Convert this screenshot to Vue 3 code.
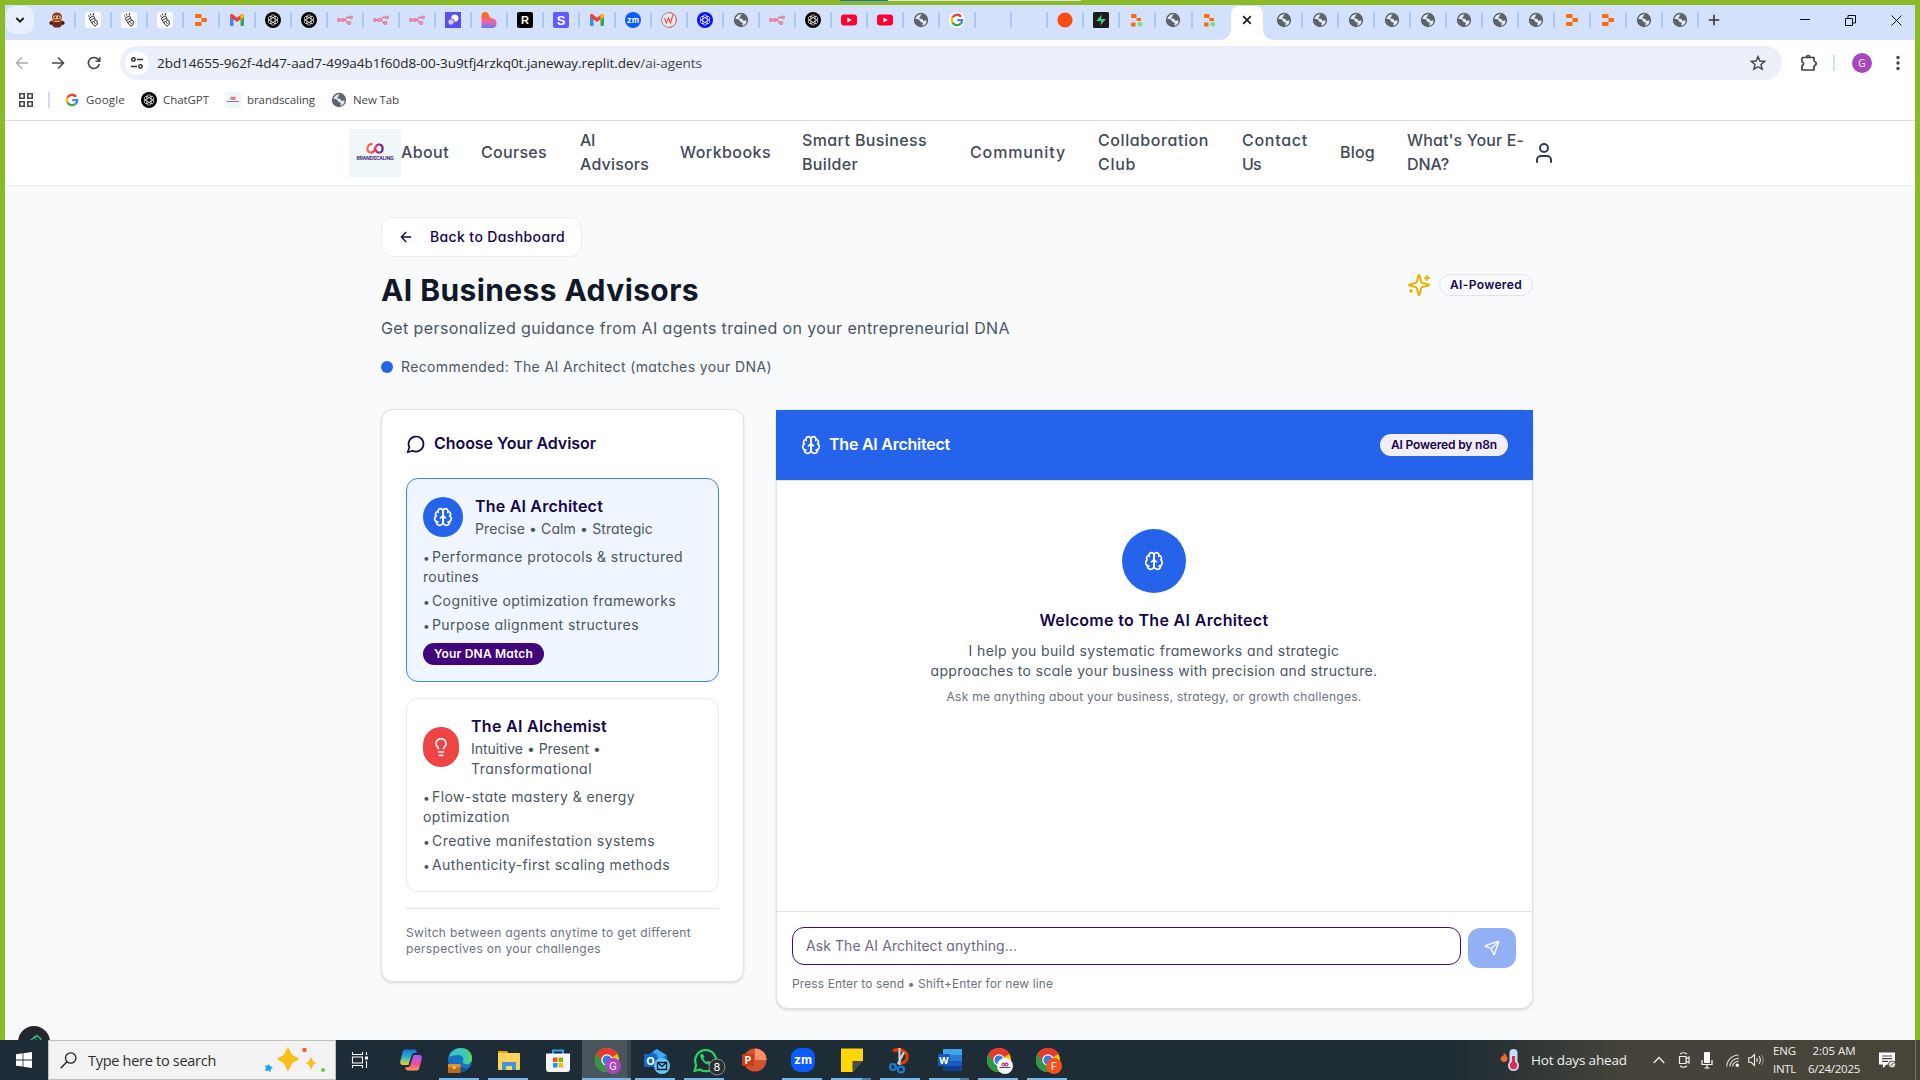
<script setup>
// Spreads the letters of a single line so that it fills the given width.
const vFit = {
  mounted(el, { value }) {
    if (!value) return
    const n = el.textContent.trim().length
    const w = el.getBoundingClientRect().width
    el.style.letterSpacing = ((value - w) / n).toFixed(3) + 'px'
  }
}

const knot = (c) =>
  `<circle cx="8" cy="8" r="8" fill="${c}"/><g fill="none" stroke="#fff" stroke-width=".7"><rect x="5.9" y="2.8" width="4.2" height="10.4" rx="2.1"/><rect x="5.9" y="2.8" width="4.2" height="10.4" rx="2.1" transform="rotate(60 8 8)"/><rect x="5.9" y="2.8" width="4.2" height="10.4" rx="2.1" transform="rotate(120 8 8)"/></g>`

const chromeBody =
  '<circle cx="12" cy="12" r="12" fill="#fbc116"/><path d="M12 12L1.6 6A12 12 0 0 1 22.4 6z" fill="#e33b2e"/><path d="M1.6 6A12 12 0 0 0 12 24L17 15 12 12z" fill="#2a9a48"/><path d="M12 6.3h10.5A12 12 0 0 0 1.6 6L7 15z" fill="#e33b2e"/><circle cx="12" cy="12" r="5.7" fill="#fff"/><circle cx="12" cy="12" r="4.5" fill="#2f7de9"/>'

const fav = {
  robot:
    '<ellipse cx="8" cy="5" rx="5" ry="4.6" fill="#8c3a1c"/><rect x="4" y="3.6" width="8" height="3.6" rx="1.6" fill="#f0b078"/><circle cx="6.2" cy="5.3" r=".9" fill="#2a1410"/><circle cx="9.8" cy="5.3" r=".9" fill="#2a1410"/><ellipse cx="8" cy="11" rx="7.4" ry="3.4" fill="#b5532a"/><rect x="4" y="9.5" width="8" height="6" rx="2" fill="#6e2a18"/><path d="M5.500 9.500h5" stroke="#f0b078"/><circle cx="2.2" cy="11" r="1.8" fill="#4a1d14"/><circle cx="13.8" cy="11" r="1.8" fill="#4a1d14"/>',
  hand:
    '<rect width="16" height="16" rx="2.5" fill="#f8fafc"/><g fill="none" stroke="#333" stroke-width="1"><path d="M4.200 6.200l4.300-2.400 1.200 2.200-4.300 2.400zM5.400 8.400l1.200 2.200 4-2.300-1-2.200M6.600 10.600l3.200 3.600 2.400-1.700V9l-1.600-1M5.200 1.500l.8 2M8.600 1l-.2 2M3 3.500l1.400 1M9 10.500l1.500 1"/></g>',
  replit:
    '<path fill="#fb6a0b" d="M3 2h4.500a1 1 0 0 1 1 1v3H3a1 1 0 0 1-1-1V3a1 1 0 0 1 1-1zM8.500 6H13a1 1 0 0 1 1 1v2a1 1 0 0 1-1 1H8.500zM3 10h5.500v3a1 1 0 0 1-1 1H3a1 1 0 0 1-1-1v-2a1 1 0 0 1 1-1z"/>',
  replitg:
    '<path fill="#fb6a0b" d="M3 2h3.500a1 1 0 0 1 1 1v3H3a1 1 0 0 1-1-1V3a1 1 0 0 1 1-1zM7.500 6H12v3H8.500a1 1 0 0 1-1-1zM3 10.500h3.500v4H3a1 1 0 0 1-1-1v-2a1 1 0 0 1 1-1z"/><circle cx="10.800" cy="12.200" r="2.400" fill="#74e08a"/>',
  gmail:
    '<path d="M1 4v9a1 1 0 0 0 1 1h2.500V7z" fill="#4285f4"/><path d="M15 4v9a1 1 0 0 1-1 1h-2.500V7z" fill="#34a853"/><path d="M1 5V3.500C1 2 2.600 1.500 3.600 2.300L8 5.700l4.400-3.400C13.400 1.500 15 2 15 3.500V5L8 10z" fill="#ea4335"/><path d="M11.500 3v4.500L15 5V3.500C15 2 13.400 1.500 12.400 2.300z" fill="#fbbc04"/>',
  gpt: knot('#000'),
  gptblue: knot('#0a12f5'),
  n8n:
    '<g fill="none" stroke="#ea6a8d" stroke-width="1.200"><circle cx="1.900" cy="8" r="1.300"/><circle cx="6" cy="8" r="1.300"/><circle cx="14" cy="5.300" r="1.300"/><circle cx="12.300" cy="11" r="1.300"/><path d="M3.200 8h1.500M7.300 8c2 0 1-2.700 3-2.700h2.400M8 8c1.700 0 1.300 3 3 3"/></g>',
  purple:
    '<rect width="16" height="16" fill="#5b4df5"/><circle cx="9.800" cy="6.200" r="3.600" fill="#fff"/><circle cx="6" cy="10" r="3.200" fill="#d6d2ff" stroke="#5b4df5"/>',
  flame:
    '<defs><linearGradient id="fl" x1="0" y1="0" x2="0" y2="1"><stop offset=".2" stop-color="#ff6a10"/><stop offset=".6" stop-color="#f263a8"/><stop offset="1" stop-color="#5a7bff"/></linearGradient></defs><path fill="url(#fl)" d="M.500 3.500a3.700 3.700 0 0 1 7-1.500c.8 1.800.8 3 2 3.800 1.200.8 3 .4 4.600 1.600 2.600 2.300 2 8.600-2.600 8.600H.500z"/>',
  r: '<rect width="16" height="16" rx="2" fill="#000"/><text x="8" y="12" text-anchor="middle" font-size="11" font-weight="700" fill="#fff" font-family="Liberation Sans,sans-serif">R</text>',
  s: '<rect width="16" height="16" rx="2" fill="#635bff"/><text x="8" y="12.500" text-anchor="middle" font-size="13" font-weight="700" fill="#fff" font-family="Liberation Sans,sans-serif">S</text>',
  zm: '<circle cx="8" cy="8" r="8" fill="#0b5cff"/><text x="8" y="10.500" text-anchor="middle" font-size="8" font-weight="700" fill="#fff" font-family="Inter,sans-serif">zm</text>',
  w: '<circle cx="8" cy="8" r="7.400" fill="#e9e9ee" stroke="#80838a" stroke-width=".9"/><path d="M8 .6a7.400 7.400 0 0 1 0 14.800" fill="none" stroke="#e66a5c" stroke-width=".9"/><path d="M3.500 6l1.800 5L7.500 6l2 5L12 2.500" fill="none" stroke="#dc5448" stroke-width="1.100"/>',
  globe:
    '<circle cx="8" cy="8" r="7.200" fill="#5f6368"/><path fill="#dfe9fb" d="M9.600 2.300c-1.500.1-2 .8-2 1.600 0 .9-1.200.9-1.200 1.900 0 1.100 1.300 1 2.300 1s1.300.8 1.300 1.500c0 .9 1.100.7 1.900.3.700-.3 1.200.1 1.700-.3.200 3-1.600 5-4.300 5.400-.3-.9.500-1.300.5-2.300 0-1.200-1.300-1.100-2.100-1.500C6.500 9.300 7 8 5.700 7.500 4.600 7.100 3.500 7 2.500 7.100c.4-3 3.500-5.600 7.100-4.800z"/>',
  yt: '<rect y="2.400" width="16" height="11.200" rx="3" fill="#ff0033"/><path d="M6.400 5.600L10.800 8l-4.400 2.400z" fill="#fff"/>',
  google:
    '<circle cx="8" cy="8" r="8" fill="#fff"/><g fill="none" stroke-width="2.300"><path d="M12.100 4.700A5.200 5.200 0 0 0 3.400 5.600" stroke="#ea4335"/><path d="M3.400 5.500a5.200 5.200 0 0 0 0 5" stroke="#fbbc05"/><path d="M3.400 10.400a5.200 5.200 0 0 0 8 1.500" stroke="#34a853"/><path d="M8.200 8.100h5a5.200 5.200 0 0 1-1.700 3.800" stroke="#4285f4"/></g>',
  none: '',
  dot: '<circle cx="8" cy="8" r="7.600" fill="#ff4a12"/>',
  supa: '<rect width="16" height="16" rx="1.500" fill="#1c1c1c"/><path d="M8.800 2.500L3.200 9h4.600zM7.500 13.500L12.900 7H8.300z" fill="#3ecf8e"/>',
  brand:
    '<rect width="16" height="16" fill="#eef6f8"/><g fill="none" stroke="#d9445f" stroke-width="1"><circle cx="6.800" cy="6.300" r="1.200"/><circle cx="9.200" cy="6.300" r="1.200"/></g><path d="M2 9.500h12" stroke="#8474ac" stroke-width="1"/>'
}

const tabsLeft = ['robot', 'hand', 'hand', 'hand', 'replit', 'gmail', 'gpt', 'gpt', 'n8n', 'n8n', 'n8n', 'purple', 'flame', 'r', 's', 'gmail', 'zm', 'w', 'gptblue', 'globe', 'n8n', 'gpt', 'yt', 'yt', 'globe', 'google', 'none', 'none', 'dot', 'supa', 'replitg', 'globe', 'replitg']
const tabsRight = ['globe', 'globe', 'globe', 'globe', 'globe', 'globe', 'globe', 'globe', 'replit', 'replit', 'globe', 'globe']

const bookmarks = [
  { icon: 'google', label: 'Google', w: 39 },
  { icon: 'gpt', label: 'ChatGPT', w: 46 },
  { icon: 'brand', label: 'brandscaling', w: 68 },
  { icon: 'globe', label: 'New Tab', w: 46 }
]

const nav = [
  { box: 48, lines: [['About', 48]] },
  { box: 67, lines: [['Courses', 66]] },
  { box: 68, lines: [['AI', 15], ['Advisors', 69]] },
  { box: 90, lines: [['Workbooks', 91]] },
  { box: 136, lines: [['Smart Business', 125], ['Builder', 56]] },
  { box: 96, lines: [['Community', 96]] },
  { box: 112, lines: [['Collaboration', 111], ['Club', 38]] },
  { box: 66, lines: [['Contact', 66], ['Us', 19]] },
  { box: 35, lines: [['Blog', 35]] },
  { box: 125, lines: [["What's Your E-", 117], ['DNA?', 42]] }
]

const icons = {
  brain:
    '<path d="M12 5a3 3 0 1 0-5.997.125 4 4 0 0 0-2.526 5.770 4 4 0 0 0 .556 6.588A4 4 0 1 0 12 18Z"/><path d="M12 5a3 3 0 1 1 5.997.125 4 4 0 0 1 2.526 5.770 4 4 0 0 1-.556 6.588A4 4 0 1 1 12 18Z"/><path d="M15 13a4.500 4.500 0 0 1-3-4 4.500 4.500 0 0 1-3 4"/><path d="M17.599 6.500a3 3 0 0 0 .399-1.375M6.003 5.125A3 3 0 0 0 6.401 6.500M3.477 10.896a4 4 0 0 1 .585-.396M19.938 10.500a4 4 0 0 1 .585.396M6 18a4 4 0 0 1-1.967-.516M19.967 17.484A4 4 0 0 1 18 18"/>',
  bulb:
    '<path d="M15 14c.2-1 .7-1.700 1.500-2.500 1-.9 1.500-2.200 1.500-3.500A6 6 0 0 0 6 8c0 1 .2 2.200 1.500 3.500.7.7 1.300 1.500 1.500 2.500"/><path d="M9 18h6M10 22h4"/>',
  chat: '<path d="M7.900 20A9 9 0 1 0 4 16.100L2 22Z"/>',
  user: '<path d="M19 21v-2a4 4 0 0 0-4-4H9a4 4 0 0 0-4 4v2"/><circle cx="12" cy="7" r="4"/>',
  left: '<path d="m12 19-7-7 7-7M19 12H5"/>',
  sparkles:
    '<path d="M9.937 15.500A2 2 0 0 0 8.500 14.063l-6.135-1.582a.5.5 0 0 1 0-.962L8.500 9.936A2 2 0 0 0 9.937 8.500l1.582-6.135a.5.5 0 0 1 .963 0L14.063 8.500A2 2 0 0 0 15.500 9.937l6.135 1.581a.5.5 0 0 1 0 .964L15.500 14.063a2 2 0 0 0-1.437 1.437l-1.582 6.135a.5.5 0 0 1-.963 0z"/><path d="M20 3v4M22 5h-4M4 17v2M5 18H3"/>',
  send:
    '<path d="M14.536 21.686a.5.5 0 0 0 .937-.024l6.500-19a.496.496 0 0 0-.635-.635l-19 6.500a.5.5 0 0 0-.024.937l7.930 3.180a2 2 0 0 1 1.112 1.110z"/><path d="m21.854 2.147-10.940 10.939"/>'
}

const agents = [
  {
    id: 'architect', icon: 'brain', name: 'The AI Architect', nameW: 128,
    traits: [['Precise • Calm • Strategic', 178]],
    points: [[['Performance protocols & structured', 251], ['routines', 56]], [['Cognitive optimization frameworks', 244]], [['Purpose alignment structures', 207]]],
    match: true
  },
  {
    id: 'alchemist', icon: 'bulb', name: 'The AI Alchemist', nameW: 136,
    traits: [['Intuitive • Present •', 130], ['Transformational', 121]],
    points: [[['Flow-state mastery & energy', 203], ['optimization', 87]], [['Creative manifestation systems', 223]], [['Authenticity-first scaling methods', 238]]],
    match: false
  }
]

const badge = (bg, ch) =>
  `<circle cx="18" cy="18" r="8" fill="${bg}"/><text x="18" y="21.600" text-anchor="middle" font-size="10" fill="#fff" font-family="Inter,sans-serif">${ch}</text>`

const apps = [
  { run: false, body: '<defs><linearGradient id="c1" x1="0" y1="0" x2="0" y2="1"><stop stop-color="#1a6fe0"/><stop offset=".5" stop-color="#27b5c9"/><stop offset="1" stop-color="#f4d21c"/></linearGradient><linearGradient id="c2" x1="0" y1="0" x2="0" y2="1"><stop stop-color="#a95af0"/><stop offset=".6" stop-color="#ee4f9a"/><stop offset="1" stop-color="#ff9a4a"/></linearGradient></defs><path fill="url(#c1)" d="M6 1.500h9c2 0 2.600 1.500 3 3l-3 .5c-1.500 0-2 1-2.500 2.500l-3 9.500H4C1.500 17 .7 15 1.300 13L3.500 4.500c.5-2 1-3 2.500-3z"/><path fill="url(#c2)" d="M18 22.500H9c-2 0-2.600-1.500-3-3l3-.5c1.500 0 2-1 2.500-2.500l3-9.500H20c2.500 0 3.300 2 2.700 4l-2.200 8.500c-.5 2-1 3-2.500 3z"/>' },
  { run: true, body: '<circle cx="12" cy="12" r="12" fill="#1673c4"/><path fill="#39c9b4" d="M1 9C3 2 9 0 13 0c7 0 11 5 11 10 0 4-3 6-6 6-3 0-4-1.500-3-3 1-1.800 0-6-5-6C6 7 3 8 1 9z"/><path fill="#5bd35e" d="M17 1.200c5 2 7 6 7 9 0 4-3 6-6 6 3-3 4-9-1-15z"/><path fill="#0d4f92" d="M9 11c-1 5 3 10 10 9-3 3-7 4-10 3.500z"/><rect y="16" width="12.500" height="9" fill="#c0691a"/><rect y="16" width="12.500" height="3.500" fill="#e29030"/><rect x="5" y="18" width="2.500" height="3" fill="#ffd36a"/>' },
  { run: true, body: '<path fill="#e8a317" d="M1 3h9l2 3H1z"/><rect x="1" y="5" width="22" height="17" rx="1" fill="#ffd35c"/><path fill="#3d95dd" d="M5 22v-8h14v8h-4v-4H9v4z"/>' },
  { run: false, body: '<path d="M7 6V2.500h10V6" fill="none" stroke="#2fa8e8" stroke-width="2"/><path fill="#f5f5f5" d="M0 5.500h24V21a3 3 0 0 1-3 3H3a3 3 0 0 1-3-3z"/><path fill="#f25022" d="M7 9.500h4.500V14H7z"/><path fill="#7fba00" d="M12.500 9.500H17V14h-4.500z"/><path fill="#00a4ef" d="M7 15h4.500v4.500H7z"/><path fill="#ffb900" d="M12.500 15H17v4.500h-4.500z"/>' },
  { run: true, active: true, body: chromeBody + badge('#ab47bc', 'G') },
  { run: true, body: '<path fill="#1f6fd0" d="M4 7l8-6 11 6v12H4z"/><path fill="#45a8ee" d="M9 4l4-3 9 6-6 5z"/><rect y="6" width="13" height="13" rx="1" fill="#1567c2"/><text x="6.500" y="16.500" text-anchor="middle" font-size="11" font-weight="700" fill="#fff" font-family="Inter,sans-serif">O</text><circle cx="18" cy="18" r="8" fill="#62c6f8"/><path d="M13.500 14.500h9v7h-9zl4.500 4 4.500-4" fill="none" stroke="#10202c" stroke-width="1.300"/>' },
  { run: true, body: '<path d="M1.500 23l1.600-6A10.500 10.500 0 1 1 7 21.500z" fill="none" stroke="#25d366" stroke-width="2.200"/><path fill="#25d366" d="M8 6c-3 3 4 12 9 10.500 1.500-.5 1.500-2 1-2.500l-2.500-1.300-1.500 1.300c-2-.7-3-2-3.600-3.500L11.500 9 10 6z"/><circle cx="24" cy="19" r="8" fill="#2b2f33" stroke="#8a8f92"/><text x="24" y="23" text-anchor="middle" font-size="11" fill="#fff" font-family="Inter,sans-serif">8</text>' },
  { run: false, body: '<circle cx="13" cy="12" r="11.500" fill="#d35230"/><path fill="#ff8f6b" d="M13 .5A11.500 11.500 0 0 1 24.500 12H13z"/><rect y="6" width="12" height="12" rx="1" fill="#c43e1c"/><text x="6" y="15.800" text-anchor="middle" font-size="10" font-weight="700" fill="#fff" font-family="Inter,sans-serif">P</text>' },
  { run: true, body: '<rect width="24" height="24" rx="9" fill="#0b5cff"/><text x="12" y="16" text-anchor="middle" font-size="12" font-weight="700" fill="#fff" font-family="Inter,sans-serif">zm</text>' },
  { run: true, more: true, body: '<path fill="#ffd60a" d="M1 .5h22v12L12.500 24H1z"/><path fill="#4a4a4a" d="M12.500 13H23L12.500 24z"/>' },
  { run: true, body: '<path d="M4 3c7-3 15 0 14 7-1 5-6 6-9 4" fill="none" stroke="#d83b01" stroke-width="3.500"/><path d="M10.500 0v17M15 4L9 16" stroke="#c9ccd0" stroke-width="2.300"/><circle cx="4" cy="19" r="3" fill="none" stroke="#1780d8" stroke-width="2.200"/><circle cx="12" cy="21.500" r="3" fill="none" stroke="#1780d8" stroke-width="2.200"/>' },
  { run: true, more: true, body: '<rect x="5" y="1" width="19" height="6" fill="#41a5ee"/><rect x="5" y="7" width="19" height="6" fill="#2b7cd3"/><rect x="5" y="13" width="19" height="5" fill="#185abd"/><rect x="5" y="18" width="19" height="5" fill="#103f91"/><rect y="6" width="12" height="12" rx="1" fill="#185abd"/><text x="6" y="15.600" text-anchor="middle" font-size="9.500" font-weight="700" fill="#fff" font-family="Inter,sans-serif">W</text>' },
  { run: true, body: chromeBody + '<circle cx="18" cy="18" r="8" fill="#f3f6fa"/><g fill="none" stroke="#d0355f" stroke-width="1.100"><circle cx="16.400" cy="16.500" r="1.400"/><circle cx="19.600" cy="16.500" r="1.400"/></g><path d="M12.500 19.500h11" stroke="#58408c"/>' },
  { run: true, body: chromeBody + badge('#f4511e', 'F') }
]
</script>

<template>
  <div class="screen">
    <div class="desktop">
      <div class="topline"><i class="tl-blue"></i><i class="tl-grey"></i></div>
      <div class="browser">
        <div class="tabstrip">
          <div class="tab-search">
            <svg width="10" height="8" viewBox="0 0 10 8"><path d="M1.300 2L5 5.700 8.700 2" fill="none" stroke="#1f1f1f" stroke-width="1.900" /></svg>
          </div>
          <div v-for="(t, i) in tabsLeft" :key="'l' + i" class="tab" :class="{ last: i === tabsLeft.length - 1 }">
            <svg width="16" height="16" viewBox="0 0 16 16" v-html="fav[t]"></svg>
          </div>
          <div class="tab-active">
            <svg width="10" height="10" viewBox="0 0 10 10"><path d="M1.200 1.200l7.600 7.600M8.800 1.200L1.200 8.800" stroke="#1f1f1f" stroke-width="1.700" /></svg>
          </div>
          <div v-for="(t, i) in tabsRight" :key="'r' + i" class="tab">
            <svg width="16" height="16" viewBox="0 0 16 16" v-html="fav[t]"></svg>
          </div>
          <svg class="plus" width="12" height="12" viewBox="0 0 12 12"><path d="M6 .7v10.600M.7 6h10.600" stroke="#333" stroke-width="1.600" /></svg>
          <div class="wincontrols">
            <svg width="10" height="10" viewBox="0 0 10 10"><path d="M0 4.500h10" stroke="#111" /></svg>
            <svg width="11" height="11" viewBox="0 0 11 11"><path d="M.5 3.500h7v7h-7zM3 3.500V.5h7.500V8H7.500" fill="none" stroke="#111" /></svg>
            <svg width="11" height="11" viewBox="0 0 11 11"><path d="M.5.5l10 10M10.500.5l-10 10" stroke="#111" /></svg>
          </div>
        </div>

        <div class="toolbar">
          <svg width="14" height="14" viewBox="0 0 14 14"><path d="M13 7H1.500M7 1.500L1.500 7 7 12.500" fill="none" stroke="#a9abae" stroke-width="1.500" /></svg>
          <svg width="14" height="14" viewBox="0 0 14 14"><path d="M1 7h11.500M7 1.500L12.500 7 7 12.500" fill="none" stroke="#474747" stroke-width="1.600" /></svg>
          <svg width="14" height="14" viewBox="0 0 14 14"><path d="M12.300 8A5.500 5.500 0 1 1 11.200 3.500L12.500 5M12.700 1v4.200H8.500" fill="none" stroke="#474747" stroke-width="1.600" /></svg>
          <div class="urlbar">
            <div class="site">
              <svg width="14" height="14" viewBox="0 0 14 14"><g fill="none" stroke="#333" stroke-width="1.500"><circle cx="3.500" cy="3.500" r="1.700" /><circle cx="10.500" cy="10.500" r="1.700" /><path d="M7 3.500h6M1 10.500h6" /></g></svg>
            </div>
            <span class="url"><span v-fit="545">2bd14655-962f-4d47-aad7-499a4b1f60d8-00-3u9tfj4rzkq0t.janeway.replit.dev<span class="path">/ai-agents</span></span></span>
            <svg class="star" width="16" height="16" viewBox="0 0 16 16"><path d="M8 1.600l1.900 4.400 4.800.4-3.700 3.100 1.200 4.700L8 11.700l-4.200 2.500L5 9.500 1.300 6.400 6.100 6z" fill="none" stroke="#444" stroke-width="1.400" /></svg>
          </div>
          <svg class="ext" width="18" height="18" viewBox="0 0 18 18"><path d="M2 3.500h12v4M14 11.500V16H2v-4.500c2.200-.6 2.200-3 0-3.500v-4.500M6.500 3.300c0-2.400 3.400-2.400 3.400 0M14.200 7.500c2.600 0 2.600 4 0 4" fill="none" stroke="#444" stroke-width="1.700" stroke-linejoin="round" /></svg>
          <i class="tsep"></i>
          <div class="avatar">G</div>
          <svg class="dots" width="4" height="16" viewBox="0 0 4 16"><g fill="#474747"><circle cx="2" cy="2.500" r="1.700" /><circle cx="2" cy="8" r="1.700" /><circle cx="2" cy="13.500" r="1.700" /></g></svg>
        </div>

        <div class="bookmarks">
          <svg width="14" height="14" viewBox="0 0 14 14"><path d="M.8.8h4.400v4.400H.8zM8.800.8h4.400v4.400H8.800zM.8 8.800h4.400v4.400H.8zM8.800 8.800h4.400v4.400H8.800z" fill="none" stroke="#474747" stroke-width="1.600" /></svg>
          <i class="bsep"></i>
          <div v-for="b in bookmarks" :key="b.label" class="bm">
            <svg width="16" height="16" viewBox="0 0 16 16" v-html="fav[b.icon]"></svg>
            <span class="bm-label" :style="{ width: b.w + 'px' }"><span v-fit="b.w">{{ b.label }}</span></span>
          </div>
        </div>

        <div class="page">
          <nav class="nav">
            <div class="logo">
              <svg width="18" height="11" viewBox="0 0 18 11"><defs><linearGradient id="lg" gradientUnits="userSpaceOnUse" x1="1" y1="0" x2="17" y2="0"><stop stop-color="#ff7038" /><stop offset=".5" stop-color="#e03a5c" /><stop offset="1" stop-color="#6a1b8c" /></linearGradient></defs><path d="M6.500 1.300C3.800.6 1.400 2.500 1.400 5.500c0 5 5.600 5.400 7.200 1.400l1-2.800c1.400-4 7-3.400 7 1.400 0 5-5.600 5.400-7 1.400L8.600 4.100" fill="none" stroke="url(#lg)" stroke-width="2.100" /></svg>
              <span class="logo-text"><span v-fit="37">BRANDSCALING</span></span>
            </div>
            <div class="links">
              <div v-for="(n, i) in nav" :key="i" class="link" :style="{ width: n.box + 'px' }">
                <div v-for="l in n.lines" :key="l[0]"><span v-fit="l[1]">{{ l[0] }}</span></div>
              </div>
            </div>
            <svg class="ico user" width="24" height="24" viewBox="0 0 24 24" v-html="icons.user"></svg>
          </nav>

          <main class="main">
            <button class="back">
              <svg class="ico" width="16" height="16" viewBox="0 0 24 24" v-html="icons.left"></svg>
              <span v-fit="135">Back to Dashboard</span>
            </button>
            <header class="head">
              <div>
                <h1><span v-fit="318">AI Business Advisors</span></h1>
                <p class="sub"><span v-fit="629">Get personalized guidance from AI agents trained on your entrepreneurial DNA</span></p>
                <p class="rec"><i></i><span v-fit="371">Recommended: The AI Architect (matches your DNA)</span></p>
              </div>
              <div class="powered">
                <svg class="ico spark" width="24" height="24" viewBox="0 0 24 24" v-html="icons.sparkles"></svg>
                <div class="pill"><span v-fit="72">AI-Powered</span></div>
              </div>
            </header>

            <div class="cols">
              <section class="card chooser">
                <h2><svg class="ico" width="20" height="20" viewBox="0 0 24 24" v-html="icons.chat"></svg><span v-fit="162">Choose Your Advisor</span></h2>
                <div v-for="a in agents" :key="a.id" class="agent" :class="a.id">
                  <div class="agent-head">
                    <div class="face"><svg class="ico" width="20" height="20" viewBox="0 0 24 24" v-html="icons[a.icon]"></svg></div>
                    <div>
                      <h3><span v-fit="a.nameW">{{ a.name }}</span></h3>
                      <div v-for="t in a.traits" :key="t[0]" class="body"><span v-fit="t[1]">{{ t[0] }}</span></div>
                    </div>
                  </div>
                  <div class="points">
                    <div v-for="(p, i) in a.points" :key="i">
                      <div v-for="(l, j) in p" :key="l[0]" class="body"><span v-if="j === 0" class="bullet">•</span><span v-fit="l[1]">{{ l[0] }}</span></div>
                    </div>
                  </div>
                  <div v-if="a.match" class="match"><span v-fit="99">Your DNA Match</span></div>
                </div>
                <div class="note">
                  <div><span v-fit="285">Switch between agents anytime to get different</span></div>
                  <div><span v-fit="195">perspectives on your challenges</span></div>
                </div>
              </section>

              <section class="card chat">
                <div class="chat-head">
                  <svg class="ico" width="20" height="20" viewBox="0 0 24 24" v-html="icons.brain"></svg>
                  <strong><span v-fit="121">The AI Architect</span></strong>
                  <div class="n8n"><span v-fit="106">AI Powered by n8n</span></div>
                </div>
                <div class="messages">
                  <div class="face big"><svg class="ico" width="20" height="20" viewBox="0 0 24 24" v-html="icons.brain"></svg></div>
                  <h3><span v-fit="229">Welcome to The AI Architect</span></h3>
                  <div class="body"><span v-fit="371">I help you build systematic frameworks and strategic</span></div>
                  <div class="body"><span v-fit="447">approaches to scale your business with precision and structure.</span></div>
                  <div class="tiny"><span v-fit="415">Ask me anything about your business, strategy, or growth challenges.</span></div>
                </div>
                <div class="composer">
                  <div class="row">
                    <div class="input"><span v-fit="211">Ask The AI Architect anything...</span></div>
                    <div class="send"><svg class="ico" width="16" height="16" viewBox="0 0 24 24" v-html="icons.send"></svg></div>
                  </div>
                  <div class="hint"><span v-fit="261">Press Enter to send • Shift+Enter for new line</span></div>
                </div>
              </section>
            </div>
          </main>
          <div class="bubble">
            <svg width="12" height="12" viewBox="0 0 12 12"><path d="M.5 6.500L5 2.500M4 4.500L7 1.500l4 3.500-2.500 3L6 5.500M8.500 8l2 2" fill="none" stroke="#19d184" stroke-width="1.300" /></svg>
          </div>
        </div>
      </div>
    </div>

    <div class="taskbar">
      <div class="start">
        <svg width="16" height="16" viewBox="0 0 16 16"><path fill="#fff" d="M0 2.200l6.600-.9v6.200H0zM7.400 1.200L16 0v7.500H7.400zM0 8.400h6.600v6.200L0 13.700zM7.400 8.400H16V16l-8.600-1.200z" /></svg>
      </div>
      <div class="search">
        <svg width="17" height="17" viewBox="0 0 17 17"><circle cx="10.700" cy="6" r="5.200" fill="none" stroke="#222" stroke-width="1.300" /><path d="M7 9.800L.7 16.200" stroke="#222" stroke-width="1.400" /></svg>
        <span class="search-text"><span v-fit="128">Type here to search</span></span>
        <svg class="stars" width="62" height="30" viewBox="0 0 62 30"><path fill="#fbbf1d" d="M24 2c1 1 3 6 4.500 8 2 1.600 5.500 2.500 6.500 4-1 1.500-4.500 2.400-6.500 4-1.500 2-3.500 7.500-4.500 8.500-1-1-3-6.500-4.500-8.500-2-1.600-5.500-2.500-6.500-4 1-1.500 4.500-2.400 6.500-4 1.500-2 3.500-7 4.500-8zM47 12c1 1 1.500 3.500 2.500 4.500s2 .8 3 1.500c-1 .7-2 .7-3 1.700s-1.500 3.800-2.500 4.800c-1-1-1.500-3.800-2.500-4.800s-2-1-3-1.700c1-.7 2-.5 3-1.500s1.500-3.500 2.500-4.500z" /><path fill="#16a5f0" d="M5 19l1.300 2.600L9 22l-2 2-.3 3-2.500-1.600L1 26l1-3-1-2.500 2.800-.1z" /><circle cx="40.500" cy="5" r="2.200" fill="#f25c2a" /><circle cx="59" cy="25" r="2" fill="#7ac143" /></svg>
      </div>
      <div class="taskview">
        <svg width="16" height="16" viewBox="0 0 16 16"><path d="M.5 0v2.500h10V0M.5 5h10v6H.5zM.5 16v-2.500h10V16M14.500 0v3M14.500 9v7" fill="none" stroke="#fff" stroke-width="1.100" /><rect x="13" y="4.500" width="3" height="3" fill="#fff" /></svg>
      </div>
      <div class="apps">
        <div v-for="(a, i) in apps" :key="i" class="app" :class="{ run: a.run, active: a.active, more: a.more }">
          <svg width="24" height="24" viewBox="0 0 24 24" v-html="a.body"></svg>
        </div>
      </div>
      <div class="weather">
        <svg width="20" height="24" viewBox="0 0 20 24"><path fill="#f4692c" d="M4 5c3 3 4 5 3.300 7.200C6.500 14.500 2 14.500.8 12 0 9.500 2 9 2 7.500l1 1z" /><rect x="9.500" y="1" width="8" height="17" rx="4" fill="#c9def2" /><circle cx="13.500" cy="17.500" r="5.500" fill="#c9def2" /><circle cx="13.500" cy="17.500" r="3.700" fill="#e02c4c" /><rect x="12" y="8" width="3" height="9" fill="#e02c4c" /></svg>
        <span v-fit="96">Hot days ahead</span>
      </div>
      <div class="tray">
        <svg width="12" height="8" viewBox="0 0 12 8"><path d="M.7 7L6 1.500 11.300 7" fill="none" stroke="#eee" stroke-width="1.300" /></svg>
        <svg width="13" height="16" viewBox="0 0 13 16"><path d="M1.500 4.500h6.500v7H1.500zM8 7l3-2v6L8 9M2 2Q5.500-.5 9 2M2 14q3.500 2.500 7 0" fill="none" stroke="#eee" stroke-width="1.200" /></svg>
        <svg width="12" height="17" viewBox="0 0 12 17"><rect x="3" width="6" height="11" rx=".8" fill="#fff" /><path d="M1 8v4.500h10V8M6 12.500V16M3.500 16h5" fill="none" stroke="#fff" stroke-width="1.200" /></svg>
        <svg width="14" height="13" viewBox="0 0 14 13"><g fill="none" stroke="#d8d8d4" stroke-width="1.200"><path d="M.7 12.500A12 12 0 0 1 12.500 1M3.700 12.500a9 9 0 0 1 9-8.200M6.500 12.500a6 6 0 0 1 6-5.200" /></g><circle cx="11.300" cy="11.200" r="1.700" fill="#fff" /></svg>
        <svg width="17" height="14" viewBox="0 0 17 14"><g fill="none" stroke="#eee" stroke-width="1.100"><path d="M.7 4.700h2.500L6.500 1.500v11L3.200 9.300H.7zM8.700 5q1.300 2 0 4M11 3q2.700 4 0 8" /><path d="M13.300 1.500q4 5.500 0 11" stroke="#8b8a82" /></g></svg>
        <div class="lang"><div><span v-fit="23">ENG</span></div><div><span v-fit="23">INTL</span></div></div>
        <div class="clock"><div><span v-fit="43">2:05 AM</span></div><div><span v-fit="52">6/24/2025</span></div></div>
        <svg width="17" height="17" viewBox="0 0 17 17"><path fill="#fff" d="M0 .5h16v12H7.500L4 16v-3.500H0z" /><path d="M3 4h10M3 6.700h10M3 9.400h6" stroke="#46443a" stroke-width="1.200" /><circle cx="13" cy="12.500" r="3.500" fill="#e8e8e4" stroke="#46443a" /><path d="M11.500 14l3-3" stroke="#46443a" /></svg>
      </div>
      <i class="peek"></i>
    </div>
  </div>
</template>

<style>
html,
body {
  margin: 0;
  overflow: hidden;
}
</style>

<style scoped>
* {
  box-sizing: border-box;
}
.screen {
  width: 1920px;
  height: 1080px;
  display: flex;
  flex-direction: column;
  overflow: hidden;
  background: #8abb26;
  font-family: Inter, sans-serif;
}
svg {
  display: block;
  flex: none;
  overflow: visible;
}
span {
  white-space: nowrap;
}
h1,
h2,
h3,
p {
  margin: 0;
}
.desktop {
  height: 1040px;
  padding: 0 5px;
  display: flex;
  flex-direction: column;
}
.topline {
  height: 5px;
  display: flex;
  padding-left: 835px;
}
.topline i {
  height: 1px;
}
.tl-blue {
  width: 48px;
  background: #1677c8;
}
.tl-grey {
  width: 193px;
  background: #dfe0dc;
}
.browser {
  flex: 1;
  min-height: 0;
  display: flex;
  flex-direction: column;
  background: #fff;
  font-family: "Open Sans", "Noto Sans", sans-serif;
}

/* Tab strip */
.tabstrip {
  height: 35px;
  display: flex;
  background: #d3e1fc;
}
.tab-search {
  width: 28px;
  height: 28px;
  margin: 1px 6px 0 1px;
  border-radius: 9px;
  background: #e8effd;
  display: flex;
  align-items: center;
  justify-content: center;
}
.tab {
  width: 36.030px;
  height: 16px;
  margin-top: 7px;
  display: flex;
  justify-content: center;
  border-right: 2px solid #a8c7fa;
  flex: none;
}
.tab.last {
  border-right-color: transparent;
}
.tab-active {
  position: relative;
  width: 32px;
  height: 34px;
  margin: 1px 4px 0 2px;
  border-radius: 8px 8px 0 0;
  background: #fff;
  display: flex;
  justify-content: center;
  align-items: center;
  padding-bottom: 6px;
}
.tab-active::before,
.tab-active::after {
  content: "";
  position: absolute;
  bottom: 0;
  width: 10px;
  height: 10px;
}
.tab-active::before {
  left: -10px;
  background: radial-gradient(circle at 0 0, transparent 9.500px, #fff 10px);
}
.tab-active::after {
  right: -10px;
  background: radial-gradient(circle at 100% 0, transparent 9.500px, #fff 10px);
}
.plus {
  margin: 9px 0 0 9px;
}
.wincontrols {
  margin: 10px 13px 0 auto;
  display: flex;
  gap: 35px;
}

/* Toolbar */
.toolbar {
  height: 46px;
  display: flex;
  align-items: center;
  padding-left: 10px;
}
.toolbar > svg:nth-child(2) {
  margin-left: 22px;
}
.toolbar > svg:nth-child(3) {
  margin-left: 22px;
}
.urlbar {
  width: 1662px;
  height: 34px;
  margin-left: 19px;
  border-radius: 17px;
  background: #ebeff9;
  display: flex;
  align-items: center;
  padding: 0 16px 0 5px;
}
.site {
  width: 24px;
  height: 24px;
  border-radius: 50%;
  background: #fff;
  display: flex;
  align-items: center;
  justify-content: center;
}
.url {
  margin-left: 8px;
  font-size: 13.500px;
  color: #26282b;
}
.path {
  color: #44474b;
}
.star {
  margin-left: auto;
}
.toolbar .ext {
  margin-left: 18px;
}
.tsep {
  width: 2px;
  height: 16px;
  margin-left: 15px;
  background: #d0e0fb;
}
.avatar {
  width: 20px;
  height: 20px;
  margin-left: 17px;
  border-radius: 50%;
  background: #ab47bc;
  color: #fff;
  font-size: 10px;
  line-height: 20px;
  text-align: center;
}
.toolbar .dots {
  margin-left: 24px;
}
.bookmarks {
  height: 35px;
  display: flex;
  align-items: center;
  padding: 0 0 6px 14px;
  border-bottom: 1px solid #dcdde0;
}
.bsep {
  width: 2px;
  height: 16px;
  margin: 0 14px 0 15px;
  background: #d0e0fb;
}
.bm {
  display: flex;
  align-items: center;
  gap: 6px;
  margin-right: 16px;
}
.bm-label {
  font-size: 11.500px;
  line-height: 16px;
  color: #3f4246;
}

/* Page */
.page {
  position: relative;
  flex: 1;
  min-height: 0;
  overflow: hidden;
  background: #f8fafc;
  font-family: Inter, sans-serif;
  font-feature-settings: "cv11";
}
.nav {
  height: 65px;
  display: flex;
  align-items: center;
  padding-left: 344px;
  background: #fff;
  border-bottom: 1px solid #e9ebef;
}
.logo {
  width: 52px;
  height: 48px;
  background: #eff7f9;
  display: flex;
  flex-direction: column;
  align-items: center;
  padding-top: 14px;
}
.logo-text {
  font: 700 5px/6px Inter, sans-serif;
  color: #4a2a80;
  width: 37px;
  margin-top: 1px;
}
.links {
  display: flex;
  align-items: center;
  gap: 32px;
  padding-bottom: 2px;
}
.link {
  font-size: 16px;
  line-height: 24px;
  font-weight: 500;
  color: #414a58;
}
.ico {
  fill: none;
  stroke: currentColor;
  stroke-width: 2;
  stroke-linecap: round;
  stroke-linejoin: round;
}
.user {
  color: #2f3a4c;
}
.main {
  width: 1152px;
  margin-left: 376px;
  padding-top: 31px;
}
.back {
  width: 201px;
  height: 40px;
  display: flex;
  align-items: center;
  gap: 16px;
  padding: 0 0 0 16px;
  border: 1px solid #ebecf2;
  border-radius: 12px;
  background: #fff;
  font: 500 14px/20px Inter, sans-serif;
  font-feature-settings: inherit;
  color: #14054d;
}
.head {
  display: flex;
  justify-content: space-between;
  margin-top: 15px;
}
h1 {
  font-size: 30px;
  line-height: 36px;
  font-weight: 700;
  color: #111827;
}
.sub {
  margin-top: 8px;
  font-size: 16px;
  line-height: 24px;
  color: #4b5563;
}
.rec {
  display: flex;
  align-items: center;
  gap: 8px;
  margin-top: 17px;
  font-size: 14px;
  line-height: 20px;
  color: #4b5563;
}
.rec i {
  width: 12px;
  height: 12px;
  border-radius: 50%;
  background: #2563eb;
}
.powered {
  display: flex;
  align-items: center;
  height: 24px;
  gap: 8px;
  margin-top: 1px;
}
.spark {
  color: #eab308;
}
.pill {
  width: 94px;
  height: 22px;
  padding-left: 10px;
  border: 1px solid #e3e4ea;
  border-radius: 11px;
  font-size: 12px;
  line-height: 20px;
  font-weight: 600;
  color: #14054d;
}
.cols {
  display: flex;
  align-items: flex-start;
  gap: 32px;
  margin-top: 32px;
}
.card {
  background: #fff;
  border: 1px solid #e2e3e9;
  border-radius: 12px;
  box-shadow: 0 1px 3px rgba(0, 0, 0, 0.1), 0 1px 2px rgba(0, 0, 0, 0.06);
}
.chooser {
  width: 363px;
  height: 573px;
  padding: 24px;
}
h2 {
  display: flex;
  align-items: center;
  gap: 8px;
  height: 20px;
  margin-bottom: 24px;
  font-size: 16px;
  font-weight: 600;
  line-height: 18px;
  color: #14054d;
}
h2 span {
  padding-bottom: 2px;
}
h3 {
  font-size: 16px;
  font-weight: 600;
  line-height: 24px;
  color: #14054d;
}
.agent {
  padding: 16px;
  margin-bottom: 16px;
  border: 1px solid #e5e7eb;
  border-radius: 12px;
}
.agent h3 {
  line-height: 22px;
  padding-bottom: 2px;
}
.agent.architect {
  border-color: #3b82f6;
  background: #eff6ff;
}
.agent-head {
  display: flex;
  align-items: center;
  gap: 12px;
}
.face {
  width: 40px;
  height: 40px;
  border-radius: 999px;
  background: #2563eb;
  color: #fff;
  display: flex;
  align-items: center;
  justify-content: center;
}
.alchemist .face {
  width: 36px;
  background: #ef4444;
}
.body {
  font-size: 14px;
  line-height: 20px;
  color: #4b5563;
}
.bullet {
  display: inline-block;
  width: 9px;
  font-size: 12px;
  line-height: 18px;
}
.points {
  display: flex;
  flex-direction: column;
  gap: 4px;
  margin-top: 8px;
}
.match {
  width: 121px;
  height: 22px;
  margin-top: 8px;
  padding-left: 11px;
  border-radius: 11px;
  background: #42047a;
  color: #fff;
  font-size: 12px;
  line-height: 22px;
  font-weight: 600;
}
.note {
  border-top: 1px solid #e0e1e6;
  padding-top: 16px;
  font-size: 12px;
  line-height: 16px;
  color: #6b7280;
}
.chat {
  width: 757px;
  height: 600px;
  display: flex;
  flex-direction: column;
}
.chat-head {
  height: 71px;
  margin: 0 -1px;
  padding: 0 25px;
  display: flex;
  align-items: center;
  background: #2563eb;
  color: #fff;
  border-bottom: 1px solid #dfe3ee;
}
.chat-head strong {
  margin-left: 8px;
  padding-bottom: 2px;
  font-size: 16px;
  font-weight: 600;
}
.n8n {
  width: 128px;
  height: 22px;
  margin-left: auto;
  padding-left: 11px;
  border-radius: 11px;
  background: #f1eef6;
  color: #14054d;
  font-size: 12px;
  line-height: 22px;
  font-weight: 600;
}
.messages {
  flex: 1;
  padding: 48px 1px 0 0;
  display: flex;
  flex-direction: column;
  align-items: center;
}
.big {
  width: 64px;
  height: 64px;
}
.messages h3 {
  margin: 15px 0 9px;
}
.tiny {
  margin-top: 8px;
  font-size: 12px;
  line-height: 16px;
  color: #6b7280;
}
.composer {
  height: 97px;
  padding: 15px 15px 0 15px;
  border-top: 1px solid #e0e1e6;
}
.row {
  display: flex;
  gap: 7px;
}
.input {
  width: 669px;
  height: 38px;
  padding-left: 13px;
  border: 1px solid #46087f;
  border-radius: 12px;
  font-size: 14px;
  line-height: 36px;
  color: #6f6880;
}
.send {
  width: 48px;
  height: 40px;
  margin-top: 1px;
  border-radius: 12px;
  background: #92b1f5;
  color: #fff;
  display: flex;
  align-items: center;
  justify-content: center;
}
.hint {
  margin-top: 8px;
  font-size: 12px;
  line-height: 16px;
  color: #6b7280;
}
.bubble {
  position: absolute;
  left: 13px;
  top: 905px;
  width: 32px;
  height: 32px;
  border-radius: 50%;
  background: #24262e;
  display: flex;
  justify-content: center;
  padding: 8px 0 0 4px;
}

/* Taskbar */
.taskbar {
  height: 40px;
  display: flex;
  background: linear-gradient(90deg, #1d2c37 0, #1d2c34 1450px, #454339 1620px, #47453a 100%);
  font-family: "Open Sans", "Noto Sans", sans-serif;
}
.start {
  width: 48px;
  display: flex;
  align-items: center;
  padding-left: 16px;
}
.search {
  width: 288px;
  border: 1px solid #c0c0c0;
  background: #f2f2f2;
  display: flex;
  align-items: center;
  padding-left: 11px;
}
.search-text {
  width: 128px;
  margin-left: 11px;
  font-size: 14.500px;
  color: #2e2e2e;
}
.stars {
  margin-left: 48px;
}
.taskview {
  width: 50px;
  display: flex;
  align-items: center;
  padding-left: 16px;
}
.apps {
  display: flex;
}
.app {
  position: relative;
  width: 49px;
  height: 40px;
  display: flex;
  justify-content: center;
  align-items: center;
}
.app.run::after {
  content: "";
  position: absolute;
  left: 4px;
  right: 5px;
  bottom: 0;
  height: 2px;
  background: #76b9ed;
}
.app.more::after {
  background: linear-gradient(90deg, #76b9ed 31px, #4f7fa6 31px);
}
.app.active {
  background: linear-gradient(90deg, #4b565c 45px, #38454c 45px);
}
.app.active::after {
  left: 0;
  right: 0;
}
.weather {
  width: 153px;
  margin-left: 428px;
  display: flex;
  align-items: center;
  gap: 11px;
  font-size: 13.500px;
  color: #f0f0ee;
}
.tray {
  display: flex;
  align-items: center;
}
.tray > svg:nth-child(2) {
  margin-left: 13px;
}
.tray > svg:nth-child(3) {
  margin-left: 10px;
}
.tray > svg:nth-child(4) {
  margin-left: 13px;
}
.tray > svg:nth-child(5) {
  margin-left: 8px;
}
.lang {
  width: 23px;
  margin-left: 8px;
  font-size: 11.500px;
  line-height: 18px;
  color: #f0f0ee;
}
.clock {
  width: 56px;
  margin: 0 17px 0 10px;
  font-size: 11.500px;
  line-height: 18px;
  text-align: center;
  color: #f0f0ee;
}
.peek {
  width: 1px;
  margin: 0 4px 0 auto;
  background: #77756d;
}
</style>
